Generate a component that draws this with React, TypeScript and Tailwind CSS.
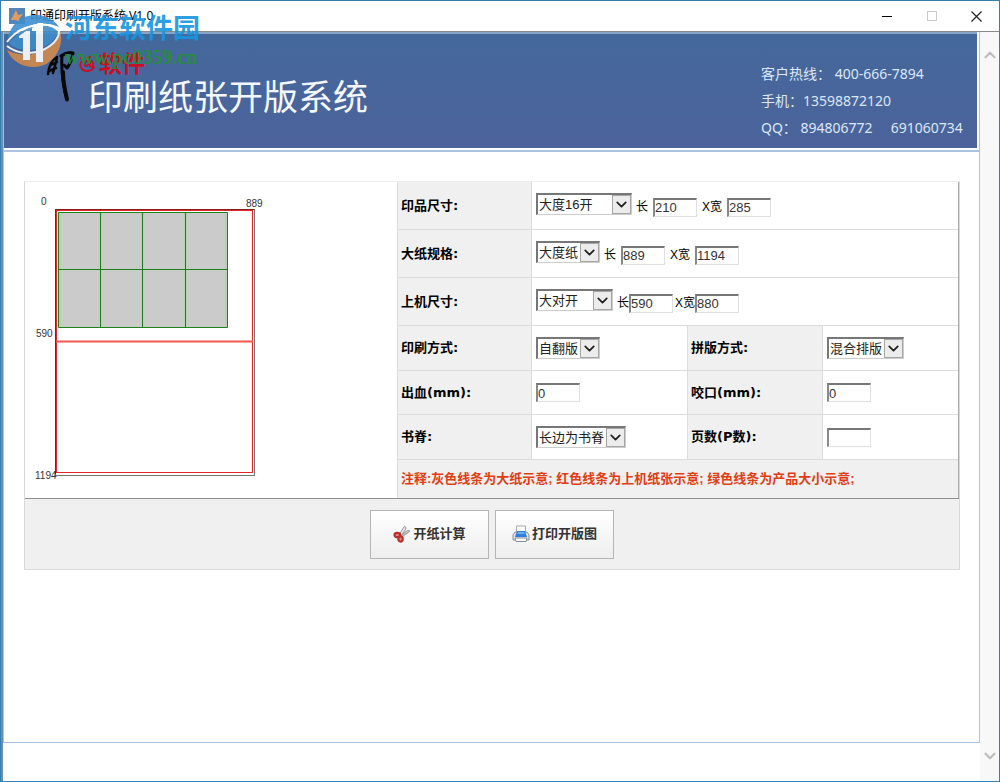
import React from 'react';
import { ChevronDown, ChevronUp } from 'lucide-react';

const Select = ({ id, label, width, options }: any) => (
    <span className={`relative inline-block shrink-0 ${width}`}>
        <select
            id={id}
            aria-label={label}
            className="block w-full h-[22px] appearance-none bg-white border border-t-2 border-l-2 border-t-[#777] border-l-[#777] border-r-[#ccc] border-b-[#ccc] pl-px pr-5 text-[13px] leading-[18px] text-[#222] outline-none"
        >
            {options.map((option: string) => (
                <option key={option}>{option}</option>
            ))}
        </select>
        <span className="pointer-events-none absolute right-px top-0.5 bottom-px w-[19px] border border-[#a5a5a5] bg-[#ececec] flex items-center justify-center">
            <ChevronDown size={17} strokeWidth={2.5} className="shrink-0 text-[#222]" />
        </span>
    </span>
);

const TextBox = ({ id, label, value }: any) => (
    <input
        id={id}
        aria-label={label}
        defaultValue={value}
        className="w-11 h-[19px] shrink-0 bg-white border border-t-2 border-l-2 border-t-[#777] border-l-[#888] border-r-[#e0e0e0] border-b-[#e0e0e0] text-[13px] leading-4 text-[#333] outline-none"
    />
);

const Label = ({ htmlFor, children }: any) => (
    <label
        htmlFor={htmlFor}
        className="flex items-center bg-[#f0f0f0] border-l border-b border-[#dcdcdc] pl-[3px] font-bold text-[13px] text-black font-['DejaVu_Sans','Noto_Sans_CJK_SC',sans-serif]"
    >
        {children}
    </label>
);

const Field = ({ wide, children }: any) => (
    <div className={`flex items-center border-l border-b border-[#dcdcdc] pl-1 ${wide ? 'col-span-3 pb-[3px]' : ''}`}>
        {children}
    </div>
);

// Sheet layout preview: gray = full sheet, red = machine sheet, green = product
const SheetPreview = () => (
    <svg width="250" height="310" viewBox="1 0 250 310" fill="none" role="img" aria-label="开版示意图">
        <rect x="31.5" y="27.5" width="199" height="266" stroke="#777" />
        <rect x="32.5" y="28.5" width="196" height="262" stroke="#e02828" />
        <path d="M32 159.5H229" stroke="#f5564e" strokeWidth="2" />
        <path d="M31 27.5H230M31.5 27V292" stroke="#8c1c1c" />
        <rect x="34.5" y="30.5" width="169" height="115" fill="#cbcbcb" />
        <path d="M76.5 30V146M118.5 30V146M161.5 30V146M35.5 31V145M202.5 31V145" stroke="#b6d0b2" strokeWidth="3" />
        <path d="M76.5 30V146M118.5 30V146M161.5 30V146M34 87.5H204M34.5 30.5H203.5V145.5H34.5Z" stroke="#1c821c" />
        <g fill="#333" fontSize="10" fontFamily="Liberation Sans, Arial, sans-serif">
            <text x="17" y="23">0</text>
            <text x="222" y="25">889</text>
            <text x="12" y="155">590</text>
            <text x="11" y="297">1194</text>
        </g>
    </svg>
);

const ScissorsIcon = () => (
    <svg width="18" height="18" viewBox="0 0 18 18" fill="none">
        <path d="M6 10L11 1.8C12.2 1 13.4 2 12.8 4L8 11.5Z" fill="#e4e4e4" stroke="#8a8a8a" strokeWidth=".8" />
        <path d="M7 11L14.5 5.5C16 5 17.4 5.7 16 7L8.5 12Z" fill="#c5c5c5" stroke="#8a8a8a" strokeWidth=".8" />
        <ellipse cx="4.3" cy="10" rx="2.8" ry="2.2" fill="#e58f89" stroke="#b8312f" strokeWidth="2.2" />
        <ellipse cx="7.5" cy="14" rx="2.2" ry="2.6" fill="#e58f89" stroke="#b8312f" strokeWidth="2.2" />
    </svg>
);

const PrinterIcon = () => (
    <svg width="18" height="18" viewBox="0 0 18 18" fill="none">
        <path d="M4.5 8V1H13.5V8" fill="#fcfcfc" stroke="#a8a8a8" />
        <path d="M1 10L3 7H15L17 10V15H1Z" fill="#e0e3e8" stroke="#8b8f96" />
        <path d="M5 6H13L15 12H3Z" fill="#2f80dc" />
        <path d="M6 7H12L12.7 9H5.3Z" fill="#6cb0f4" />
        <path d="M3 13H15L14 16.5H4Z" fill="#fff" stroke="#8b8f96" />
    </svg>
);

const Watermark = () => (
    <div className="pointer-events-none absolute left-1 top-3 flex items-start opacity-90">
        <svg width="60" height="56" viewBox="0 0 60 56" fill="none">
            {/* blue upper half, orange lower half, white band between */}
            <path d="M3 25C6 10 18 1 33 2C43 3 50 8 54 14C47 11 40 10 34 11C21 12 10 18 3 25Z" fill="#3d8fd0" />
            <path d="M4 30C10 22 20 15 30 13C40 11 49 14 53 19C50 28 42 34 32 36C21 38 10 37 4 30Z" fill="#3f8ccb" />
            <path d="M2 37C13 43 27 43 38 38C48 33 54 26 55 18C60 34 48 54 29 54C16 54 6 47 2 37Z" fill="#d28a4c" />
            <path d="M2 33C12 41 27 42 38 37C48 32 54 26 54 18C52 13 43 11 34 12C20 13 9 20 2 29" stroke="#fff" strokeWidth="2" />
            <path d="M14 23L21 18H25V47H18V25H14ZM27 15L33 10H38V49H31V18H27Z" fill="#fff" />
        </svg>
        <div className="flex flex-col">
            <span className="text-[27px] leading-8 font-bold text-[#1795df]">河东软件园</span>
            <span className="mt-0.5 text-xl leading-5 font-bold text-[#278f38] font-['Liberation_Serif',serif]">www.pc0359.cn</span>
        </div>
    </div>
);

const Banner = () => (
    <div className="flex justify-between h-[116px] bg-linear-to-b from-[#44689b] to-[#4c639b] mr-0.5 border-t-2 border-[#88a4c6]">
        <div className="flex pl-10">
            <svg width="34" height="56" viewBox="0 0 34 56" fill="none" className="mt-4 shrink-0" stroke="#080808" strokeLinecap="round" strokeLinejoin="round">
                <path d="M13 7C8 10 5 15 4 24M7 15L13 12M5 21L12 18M13 7C12 13 10 19 9 23" strokeWidth="2.5" />
                <path d="M17 6C21 3 25 2 29 3C28 9 26 14 23 18L20 15M18 6C17 19 19 35 23 50" strokeWidth="3" />
                <path d="M19 22C19 32 21 41 23 49" strokeWidth="4" />
            </svg>
            <div className="flex flex-col pt-4">
                <div className="flex items-center gap-1 h-7 text-[#c90e25]">
                    <svg width="17" height="18" viewBox="0 0 17 18" fill="none" stroke="currentColor" strokeWidth="1.8" strokeLinecap="round">
                        <path d="M8 3L12 2L10 5M8 6H12V12M8 6C6 9 7 12 9 11L12 8M3 3L4 4M3 7C1 12 4 16 9 16C13 16 15 14 16 12M12 5C15 6 16 9 14 12" />
                    </svg>
                    <span className="text-[23px] leading-7 font-bold">软件</span>
                </div>
                <h1 className="pl-2.5 text-[35px] leading-10 text-[#f3f8ff] whitespace-nowrap">印刷纸张开版系统</h1>
            </div>
        </div>
        <div className="w-[216px] shrink-0 pt-[26px] text-sm leading-[27px] text-[#dce7fa] whitespace-pre font-['Noto_Sans','Noto_Sans_CJK_SC',sans-serif]">
            <p>客户热线： 400-666-7894</p>
            <p>手机：13598872120</p>
            <p>QQ： 894806772{'     '}691060734</p>
        </div>
    </div>
);

const ActionButton = ({ icon, children }: any) => (
    <button
        type="button"
        className="w-[119px] h-[49px] flex items-center justify-center gap-0.5 border border-[#b5b5b5] bg-linear-to-b from-white to-[#eeeeee] text-[13px] font-bold text-[#333] whitespace-nowrap"
    >
        {icon}
        {children}
    </button>
);

const App = () => {
    return (
        <div className="relative min-h-screen flex flex-col bg-white border border-[#3580ae] font-['Liberation_Sans','Noto_Sans_CJK_SC',sans-serif] text-black">
            {/* Title bar */}
            <header className="flex items-center justify-between h-[30px] shrink-0 pl-2">
                <div className="flex items-center gap-1">
                    <svg width="16" height="16" viewBox="0 0 16 16">
                        <rect width="16" height="16" fill="#5684b5" />
                        <path d="M2 12L7 2L9 7L14 6L10 11L12 15L7 12Z" fill="#df9d65" />
                    </svg>
                    <span className="pl-px text-xs leading-4 font-['Noto_Sans','Noto_Sans_CJK_SC',sans-serif]">印通印刷开版系统 V1.0</span>
                </div>
                <div className="flex items-center">
                    <button type="button" aria-label="最小化" className="w-[45px] h-7 flex items-center justify-center">
                        <span className="w-2.5 h-px bg-black"></span>
                    </button>
                    <button type="button" aria-label="最大化" disabled className="w-[45px] h-7 flex items-center justify-center">
                        <span className="w-2.5 h-2.5 border border-[#d0c8c8]"></span>
                    </button>
                    <button type="button" aria-label="关闭" className="w-[45px] h-7 flex items-center justify-center">
                        <svg width="11" height="11" viewBox="0 0 11 11" stroke="#222" strokeWidth="1.2">
                            <path d="M.5 .5L10.5 10.5M10.5 .5L.5 10.5" />
                        </svg>
                    </button>
                </div>
            </header>

            <div className="flex-1 flex border-t border-[#8a8a8a]">
                <div className="flex-1 min-w-0 flex flex-col border-l-2 border-[#658fb5] pb-[38px]">
                    <main className="flex-1 border-l border-r border-b border-[#a9c2df]">
                        <Banner />
                        <div className="h-1 border-b-2 border-[#abc2e0]"></div>

                        <form className="mt-[29px] ml-5 mr-[19px] border border-t-[#ececec] border-[#d8d8d8]">
                            <div className="flex border-b border-[#8f8f8f]">
                                <div className="w-[372px] shrink-0">
                                    <SheetPreview />
                                </div>
                                <div className="flex-1 grid grid-cols-[134px_156px_135px_1fr] grid-rows-[48px_48px_48px_45px_44px_45px_38px] border-r border-[#aaa]">
                                    <Label htmlFor="product">印品尺寸:</Label>
                                    <Field wide>
                                        <Select id="product" width="w-24" options={['大度16开']} />
                                        <div className="flex items-center gap-[5px] pt-1.5 pl-1 text-xs">
                                            <span>长</span>
                                            <TextBox label="印品长" value="210" />
                                            <span>X宽</span>
                                            <TextBox label="印品宽" value="285" />
                                        </div>
                                    </Field>

                                    <Label htmlFor="paper">大纸规格:</Label>
                                    <Field wide>
                                        <Select id="paper" width="w-16" options={['大度纸']} />
                                        <div className="flex items-center gap-[5px] pt-1.5 pl-1 text-xs">
                                            <span>长</span>
                                            <TextBox label="大纸长" value="889" />
                                            <span>X宽</span>
                                            <TextBox label="大纸宽" value="1194" />
                                        </div>
                                    </Field>

                                    <Label htmlFor="machine">上机尺寸:</Label>
                                    <Field wide>
                                        <Select id="machine" width="w-[77px]" options={['大对开']} />
                                        <div className="flex items-center pt-1.5 pl-1 text-xs">
                                            <span>长</span>
                                            <TextBox label="上机长" value="590" />
                                            <span className="pl-0.5">X宽</span>
                                            <TextBox label="上机宽" value="880" />
                                        </div>
                                    </Field>

                                    <Label htmlFor="print">印刷方式:</Label>
                                    <Field>
                                        <Select id="print" width="w-16" options={['自翻版']} />
                                    </Field>
                                    <Label htmlFor="imposition">拼版方式:</Label>
                                    <Field>
                                        <Select id="imposition" width="w-[77px]" options={['混合排版']} />
                                    </Field>

                                    <Label htmlFor="bleed">出血(mm):</Label>
                                    <Field>
                                        <TextBox id="bleed" value="0" />
                                    </Field>
                                    <Label htmlFor="gripper">咬口(mm):</Label>
                                    <Field>
                                        <TextBox id="gripper" value="0" />
                                    </Field>

                                    <Label htmlFor="spine">书脊:</Label>
                                    <Field>
                                        <Select id="spine" width="w-[90px]" options={['长边为书脊']} />
                                    </Field>
                                    <Label htmlFor="pages">页数(P数):</Label>
                                    <Field>
                                        <TextBox id="pages" value="" />
                                    </Field>

                                    <p className="col-span-4 flex items-center bg-[#f0f0f0] border-l border-[#dcdcdc] pl-[3px] text-[13px] font-bold text-[#e23c12]">
                                        注释:灰色线条为大纸示意; 红色线条为上机纸张示意; 绿色线条为产品大小示意;
                                    </p>
                                </div>
                            </div>
                            <div className="flex items-center justify-center gap-1.5 h-[70px] bg-[#f0f0f0]">
                                <ActionButton icon={<ScissorsIcon />}>开纸计算</ActionButton>
                                <ActionButton icon={<PrinterIcon />}>打印开版图</ActionButton>
                            </div>
                        </form>
                    </main>
                </div>

                {/* Scroll bar */}
                <div className="w-[19px] shrink-0 flex flex-col justify-between items-center bg-[#f8f8f8] pt-3.5 pb-4 text-[#bdbdbd]">
                    <button type="button" aria-label="向上滚动"><ChevronUp size={18} strokeWidth={3} /></button>
                    <button type="button" aria-label="向下滚动"><ChevronDown size={18} strokeWidth={3} /></button>
                </div>
            </div>

            <Watermark />
        </div>
    );
};

export default App;
